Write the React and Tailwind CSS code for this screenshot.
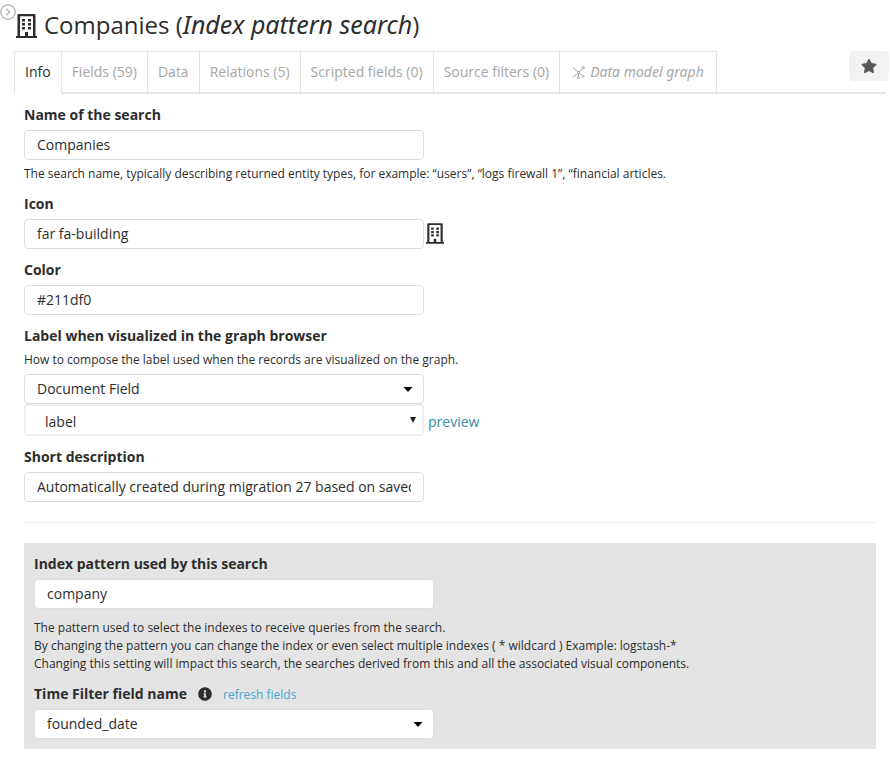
import { FaStar, FaInfoCircle } from "react-icons/fa";

const boxClass =
  "block h-[30px] w-[400px] max-w-full rounded-[4px] border border-[#dedede] bg-white px-3 text-sm text-[#2d2d2d] outline-none";
const inputClass = `${boxClass} pb-[2px]`;

function BuildingIcon({ className }) {
  return (
    <svg viewBox="0 0 21 24" fill="currentColor" className={className} aria-hidden="true">
      <path
        fillRule="evenodd"
        d="M2.500 0h16a1 1 0 0 1 1 1v21H21v2H0v-2h1.500V1a1 1 0 0 1 1-1zM4 2.200V22h5v-4h3v4h5V2.200z"
      />
      <path d="M6 5h3v2.600H6zM12 5h3v2.600h-3zM6 9h3v2.600H6zM12 9h3v2.600h-3zM6 13h3v2.600H6zM12 13h3v2.600h-3z" />
    </svg>
  );
}

function GraphIcon() {
  return (
    <svg viewBox="0 0 13 13" className="size-[13px] shrink-0" fill="none" stroke="currentColor" aria-hidden="true">
      <path d="M1 1.500L6 6M11 2L7 6M6 7.200L1 11M7 7.200l4 3M6.500 7v4" strokeWidth="1" />
      <circle cx="11.300" cy="1.600" r="1.100" />
      <circle cx="6.500" cy="6.500" r="1" />
      <circle cx="11.500" cy="10.500" r=".7" />
      <circle cx="6.500" cy="11.700" r=".9" />
    </svg>
  );
}

function Label({ htmlFor, children }) {
  return (
    <label htmlFor={htmlFor} className="block text-sm leading-5 font-bold">
      {children}
    </label>
  );
}

function Select({ id, value }) {
  return (
    <div className="relative w-[400px] max-w-full">
      <select id={id} defaultValue={value} className={`${boxClass} appearance-none`}>
        <option>{value}</option>
      </select>
      <svg viewBox="0 0 10 5" className="pointer-events-none absolute top-[13px] right-[11px] h-[5px] w-[10px]" aria-hidden="true">
        <path d="M0.500 0h9L5 5z" fill="#000" />
      </svg>
    </div>
  );
}

const tabs = ["Info", "Fields (59)", "Data", "Relations (5)", "Scripted fields (0)", "Source filters (0)"];

export default function App() {
  return (
    <div className="relative min-h-screen bg-white pb-8 font-['Open_Sans','Noto_Sans',sans-serif] text-sm text-[#2d2d2d]">
      <button aria-label="Expand sidebar" className="absolute top-1 left-0 size-4 text-[#b4b4b4]">
        <svg viewBox="0 0 16 16" fill="none" stroke="currentColor" className="size-4" aria-hidden="true">
          <circle cx="8" cy="8" r="7.200" strokeWidth="1.300" />
          <path d="M6.500 5l3.200 3-3.200 3" strokeWidth="1.500" />
        </svg>
      </button>

      <header className="flex items-center gap-[7px] pt-2 pl-4">
        <BuildingIcon className="h-6 w-[21px]" />
        <h1 className="pb-[2px] text-2xl leading-[34px]">
          Companies (<em className="font-['Noto_Sans',sans-serif] text-[25px] leading-none">Index pattern search</em>)
        </h1>
      </header>

      <div className="mt-[7px] mr-1 ml-[14px] flex h-[43px] items-start border-b-2 border-[#e4e4e4]">
        <nav role="tablist" className="flex h-[43px] border-l border-[#e4e4e4]">
          {tabs.map((tab, i) => (
            <button
              key={tab}
              role="tab"
              aria-selected={i === 0}
              className={
                i === 0
                  ? "h-[43px] border-t border-r border-[#e4e4e4] bg-white px-[10px] pb-[2px] whitespace-nowrap"
                  : "h-[41px] border-t border-r border-[#e4e4e4] px-[10px] whitespace-nowrap text-[#a6a6a6]"
              }
            >
              {tab}
            </button>
          ))}
          <button
            role="tab"
            aria-selected={false}
            className="flex h-[41px] items-center gap-[5px] border-t border-r border-[#e4e4e4] px-3 font-['Noto_Sans',sans-serif] whitespace-nowrap text-[#a6a6a6] italic"
          >
            <GraphIcon />
            Data model graph
          </button>
        </nav>
        <button
          aria-label="Favorite"
          className="-mr-[3px] ml-auto flex h-[30px] w-10 shrink-0 items-center justify-center rounded-[4px] bg-[#f2f2f2] text-[#5a5a5a]"
        >
          <FaStar className="size-4" />
        </button>
      </div>

      <main className="mr-[14px] ml-6 pt-[11px]">
        <form className="flex flex-col gap-[11px]">
          <div>
            <Label htmlFor="name">Name of the search</Label>
            <input id="name" defaultValue="Companies" className={`${inputClass} mt-[5px]`} />
            <p className="mt-[5px] text-xs leading-[18px]">
              The search name, typically describing returned entity types, for example: “users”, “logs firewall 1”, “financial articles.
            </p>
          </div>

          <div>
            <Label htmlFor="icon">Icon</Label>
            <div className="mt-[5px] flex items-center gap-[2px]">
              <input id="icon" defaultValue="far fa-building" className={inputClass} />
              <BuildingIcon className="mb-[2px] h-[21px] w-[18px]" />
            </div>
          </div>

          <div>
            <Label htmlFor="color">Color</Label>
            <input id="color" defaultValue="#211df0" className={`${inputClass} mt-[5px]`} />
          </div>

          <div>
            <Label htmlFor="label-type">Label when visualized in the graph browser</Label>
            <p className="mt-[5px] mb-[5px] text-xs leading-[18px]">
              How to compose the label used when the records are visualized on the graph.
            </p>
            <Select id="label-type" value="Document Field" />
            <div className="flex items-center gap-1">
              <div className="relative w-[400px] max-w-full">
                <select
                  aria-label="Document field"
                  defaultValue="label"
                  className="block h-8 w-full appearance-none rounded-[4px] border-2 border-[#ecf0f1] bg-white pt-1 pl-[19px] text-sm outline-none"
                >
                  <option>label</option>
                </select>
                <svg viewBox="0 0 6 6" className="pointer-events-none absolute top-[13px] right-2 size-[6px]" aria-hidden="true">
                  <path d="M0 0h6L3 6z" fill="#222" />
                </svg>
              </div>
              <a href="#preview" className="pt-1 text-[#328caa]">preview</a>
            </div>
          </div>

          <div>
            <Label htmlFor="description">Short description</Label>
            <input
              id="description"
              defaultValue="Automatically created during migration 27 based on saved search"
              className={`${inputClass} mt-[5px]`}
            />
          </div>
        </form>

        <hr className="my-5 border-[#ededed]" />

        <section className="bg-[#e4e4e4] px-[10px] pt-[11px] pb-[10px]">
          <Label htmlFor="pattern">Index pattern used by this search</Label>
          <input id="pattern" defaultValue="company" className={`${inputClass} mt-[5px]`} />
          <p className="mt-[10px] text-xs leading-[18px]">
            The pattern used to select the indexes to receive queries from the search.
            <br />
            By changing the pattern you can change the index or even select multiple indexes ( * wildcard ) Example: logstash-*
            <br />
            Changing this setting will impact this search, the searches derived from this and all the associated visual components.
          </p>
          <div className="mt-[11px] mb-[5px] flex items-center">
            <Label htmlFor="time-field">Time Filter field name</Label>
            <FaInfoCircle className="ml-[11px] size-[14px]" />
            <a href="#refresh" className="ml-[11px] pt-[2px] text-xs text-[#46a8cc]">refresh fields</a>
          </div>
          <Select id="time-field" value="founded_date" />
        </section>
      </main>
    </div>
  );
}
